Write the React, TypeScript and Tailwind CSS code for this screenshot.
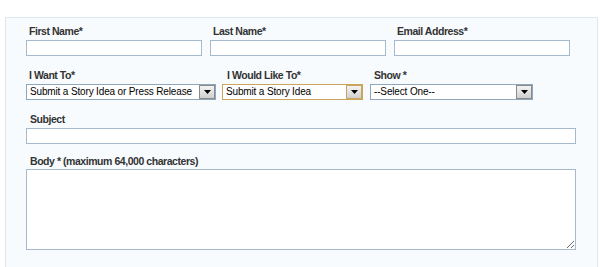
import React from 'react';

const font = { fontFamily: '"Liberation Sans", Arial, sans-serif' };

function Label({ text, className = '' }: { text: string; className?: string }) {
  return (
    <div className={`text-[10.5px] leading-[13px] font-bold tracking-[-0.45px] text-[#333] ${className}`}>{text}</div>
  );
}

function FakeSelect({ value, width, focused }: { value: string; width: string; focused?: boolean }) {
  return (
    <div
      className={`flex h-[16px] items-stretch bg-white ${width} border ${
        focused ? 'border-[#c8a65e]' : 'border-[#8fa6bf]'
      }`}
    >
      <span className="flex-1 overflow-hidden whitespace-nowrap pl-[3px] text-[10px] leading-[14px] tracking-[-0.15px] text-black">{value}</span>
      <span
        className={`flex w-[16px] items-center justify-center border bg-gradient-to-b from-[#f4f4f4] to-[#cfcfcf] ${
          focused ? 'border-[#c8a65e]' : 'border-[#8a8a8a]'
        }`}
      >
        <svg width="7" height="4" viewBox="0 0 7 4">
          <path d="M0 0h7L3.5 4z" fill="#000" />
        </svg>
      </span>
    </div>
  );
}

export default function App() {
  return (
    <div className="h-[267px] w-[600px] overflow-hidden bg-white" style={font}>
      <div className="ml-[5px] mr-[2px] mt-[17px] h-[260px] border border-[#dde7f0] bg-[#f7fbfe] pl-[20px] pt-[7px]">
        {/* name row */}
        <div className="flex gap-[8px]">
          {['First Name*', 'Last Name*', 'Email Address*'].map((t) => (
            <div key={t} className="flex w-[176px] flex-col gap-[2px]">
              <Label text={t} className="ml-[3px]" />
              <input className="h-[16px] w-full border border-[#a7bacd] bg-white outline-none" />
            </div>
          ))}
        </div>

        {/* select row */}
        <div className="mt-[13px] flex">
          <div className="flex flex-col gap-[2px]">
            <Label text="I Want To*" className="ml-[3px]" />
            <FakeSelect value="Submit a Story Idea or Press Release" width="w-[190px]" />
          </div>
          <div className="ml-[6px] flex flex-col gap-[2px]">
            <Label text="I Would Like To*" className="ml-[5px]" />
            <FakeSelect value="Submit a Story Idea" width="w-[141px]" focused />
          </div>
          <div className="ml-[7px] flex flex-col gap-[2px]">
            <Label text="Show *" className="ml-[4px]" />
            <FakeSelect value="--Select One--" width="w-[163px]" />
          </div>
        </div>

        {/* subject */}
        <div className="mt-[13px] flex w-[550px] flex-col gap-[2px]">
          <Label text="Subject" className="ml-[4px]" />
          <input className="h-[16px] w-full border border-[#a7bacd] bg-white outline-none" />
        </div>

        {/* body */}
        <div className="mt-[11px] flex w-[550px] flex-col gap-[1px]">
          <Label text="Body * (maximum 64,000 characters)" className="ml-[4px]" />
          <textarea className="h-[81px] w-full resize border border-[#a7bacd] bg-white outline-none" />
        </div>
      </div>
    </div>
  );
}
